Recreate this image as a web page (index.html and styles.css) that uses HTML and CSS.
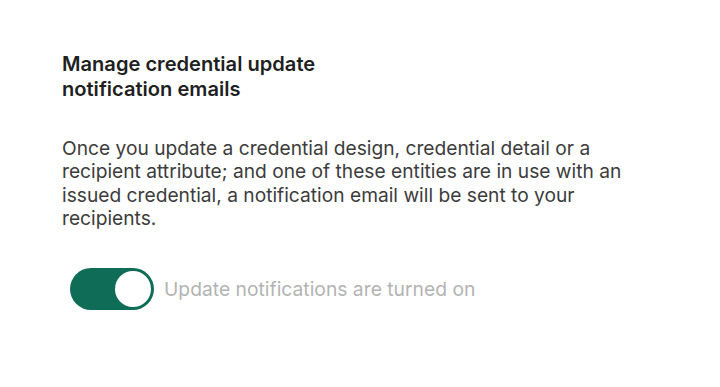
FILE: index.html
```html
<!DOCTYPE html>
<html lang="en">
<head>
<meta charset="UTF-8" />
<title>Credential notifications</title>
<link rel="stylesheet" href="styles.css">
</head>
<body>

<div class="panel">
  <h2 class="title">Manage credential update notification emails</h2>
  <p class="desc">Once you update a credential design, credential detail or a recipient attribute; and one of these entities are in use with an issued credential, a notification email will be sent to your recipients.</p>

  <label class="toggle-row">
    <span class="switch on"><span class="knob"></span></span>
    <span class="toggle-label">Update notifications are turned on</span>
  </label>
</div>

</body>
</html>
```

FILE: styles.css
```css
body { margin: 0; background-color: #fff; font-family: Inter, "Open Sans", sans-serif; }
.panel { padding: 52px 0 0 62px; width: 600px; }
.title { margin: 0; width: 300px; font-size: 20.1px; line-height: 25px; font-weight: 600; color: #1f1f1f; }
.desc { margin: 35px 0 0; font-size: 19.2px; line-height: 23.4px; color: #3c3c3c; }
.toggle-row { display: flex; align-items: center; gap: 10px; margin: 37px 0 0 8px; }
.switch { display: flex; align-items: center; justify-content: flex-end; width: 84px; height: 42px; border-radius: 21px; background-color: #0f6c57; box-sizing: border-box; padding: 3px; }
.knob { width: 36px; height: 36px; border-radius: 50%; background-color: #fff; }
.toggle-label { font-size: 19.3px; color: #b3b3b3; }
```
